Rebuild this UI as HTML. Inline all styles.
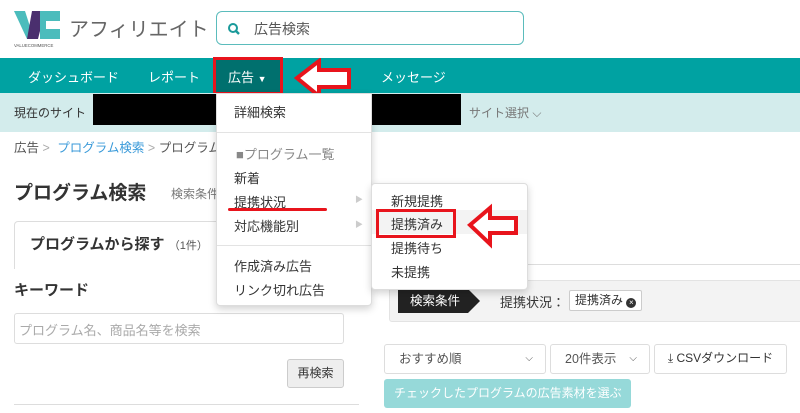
<!DOCTYPE html>
<html><head><meta charset="utf-8"><style>
*{box-sizing:border-box;margin:0;padding:0}
body{width:800px;height:413px;overflow:hidden;background:#fff;font-family:"Liberation Sans","Noto Sans CJK JP",sans-serif;color:#333;position:relative;font-size:13px}
.a{position:absolute}
</style></head><body>
<!-- logo -->
<svg class="a" style="left:14px;top:9px" width="50" height="40" viewBox="0 0 50 40">
<polygon points="0,2 11,2 20,30 13,30" fill="#4bbcbc"/>
<polygon points="18,2 31,2 24,30 13,30" fill="#4a2f6e"/>
<polygon points="26,2 46,2 46,12 32,12 32,20 46,20 46,30 26,30" fill="#4bbcbc"/>
<text x="0" y="38" font-size="4.3" fill="#555" font-family="Liberation Sans">VALUECOMMERCE</text>
</svg>
<div class="a" style="left:69px;top:13px;font-size:20px;color:#666">アフィリエイト</div>
<div class="a" style="left:216px;top:11px;width:308px;height:34px;border:1px solid #5bbcbc;border-radius:6px"></div>
<svg class="a" style="left:227px;top:22px" width="14" height="14" viewBox="0 0 14 14"><circle cx="6" cy="6" r="4" fill="none" stroke="#1a9a9a" stroke-width="2"/><line x1="9" y1="9" x2="12" y2="12" stroke="#1a9a9a" stroke-width="2.4"/></svg>
<div class="a" style="left:254px;top:19px;font-size:14px;color:#555">広告検索</div>
<!-- nav -->
<div class="a" style="left:0;top:58px;width:800px;height:35px;background:#00a2a2"></div>
<div class="a" style="left:28px;top:67px;color:#fff;font-size:13px">ダッシュボード</div>
<div class="a" style="left:148px;top:67px;color:#fff;font-size:13px">レポート</div>
<div class="a" style="left:213px;top:57px;width:70px;height:38px;background:#00706e;border:3px solid #e8141c"></div>
<div class="a" style="left:228px;top:67px;color:#fff;font-size:13px">広告 <span style="font-size:9px">▼</span></div>
<div class="a" style="left:381px;top:67px;color:#fff;font-size:13px">メッセージ</div>
<svg class="a" style="left:292px;top:58px" width="62" height="42" viewBox="0 0 62 42"><polygon points="5,20 27,3 27,12 57,12 57,29 27,29 27,38" fill="#fff" stroke="#e8141c" stroke-width="4" stroke-linejoin="miter"/></svg>
<!-- sub bar -->
<div class="a" style="left:0;top:93px;width:800px;height:39px;background:#d3ecec"></div>
<div class="a" style="left:14px;top:104px;font-size:12px;color:#333">現在のサイト</div>
<div class="a" style="left:93px;top:94px;width:368px;height:31px;background:#000"></div>
<div class="a" style="left:469px;top:104px;font-size:12px;color:#777">サイト選択 ⌵</div>
<!-- breadcrumb -->
<div class="a" style="left:14px;top:137px;font-size:12.5px;color:#555">広告 <span style="color:#aaa">&gt;</span> <span style="color:#3a9ad9;margin-left:4px">プログラム検索</span> <span style="color:#aaa">&gt;</span> プログラム</div>
<div class="a" style="left:14px;top:178px;font-size:19px;font-weight:bold;color:#333">プログラム検索</div>
<div class="a" style="left:171px;top:185px;font-size:12px;color:#777">検索条件</div>
<div class="a" style="left:14px;top:221px;width:230px;height:48px;border:1px solid #ddd;border-bottom:none;border-radius:4px 4px 0 0"></div>
<div class="a" style="left:30px;top:233px;font-size:15px;font-weight:bold;color:#333">プログラムから探す <span style="font-size:11px;font-weight:normal;color:#555">（1件）</span></div>
<div class="a" style="left:14px;top:279px;font-size:15px;font-weight:bold;color:#333">キーワード</div>
<div class="a" style="left:14px;top:313px;width:330px;height:31px;border:1px solid #ddd;border-radius:3px"></div>
<div class="a" style="left:19px;top:320px;font-size:13px;color:#aaa">プログラム名、商品名等を検索</div>
<div class="a" style="left:287px;top:359px;width:57px;height:29px;border:1px solid #ccc;background:#eee;border-radius:3px;font-size:12px;text-align:center;line-height:27px">再検索</div>
<div class="a" style="left:14px;top:404px;width:345px;height:1px;background:#ddd"></div>
<!-- right panel -->
<div class="a" style="left:389px;top:264px;width:411px;height:1px;background:#ddd"></div>
<div class="a" style="left:389px;top:280px;width:415px;height:42px;background:#f3f3f3;border:1px solid #e3e3e3;border-radius:3px"></div>
<div class="a" style="left:398px;top:289px;width:70px;height:24px;background:#222;color:#fff;font-size:12.5px;line-height:24px;padding-left:12px">検索条件</div>
<div class="a" style="left:468px;top:289px;width:0;height:0;border-top:12px solid transparent;border-bottom:12px solid transparent;border-left:12px solid #222"></div>
<div class="a" style="left:500px;top:292px;font-size:13px;color:#333">提携状況：</div>
<div class="a" style="left:569px;top:290px;width:73px;height:21px;border:1px solid #ccc;background:#fff;border-radius:2px;font-size:12px;line-height:19px;padding-left:5px">提携済み <span style="display:inline-block;width:10px;height:10px;border-radius:50%;background:#333;color:#fff;font-size:8px;line-height:10px;text-align:center;vertical-align:-1px">×</span></div>
<div class="a" style="left:384px;top:344px;width:162px;height:30px;border:1px solid #ddd;border-radius:3px;font-size:12.5px;color:#555;line-height:28px;padding-left:14px">おすすめ順<span style="position:absolute;right:12px;font-size:10px">⌵</span></div>
<div class="a" style="left:550px;top:344px;width:100px;height:30px;border:1px solid #ddd;border-radius:3px;font-size:12.5px;color:#555;line-height:28px;padding-left:14px">20件表示<span style="position:absolute;right:12px;font-size:10px">⌵</span></div>
<div class="a" style="left:654px;top:344px;width:133px;height:30px;border:1px solid #ddd;border-radius:3px;font-size:12px;color:#333;line-height:26px;text-align:center">⤓ CSVダウンロード</div>
<div class="a" style="left:384px;top:379px;width:247px;height:29px;background:#96d9d9;border-radius:3px;font-size:12px;color:#fff;line-height:29px;padding-left:10px;white-space:nowrap">チェックしたプログラムの広告素材を選ぶ</div>
<!-- dropdown -->
<div class="a" style="left:216px;top:93px;width:156px;height:213px;background:#fff;border:1px solid #ddd;border-radius:0 0 4px 4px;box-shadow:0 3px 8px rgba(0,0,0,.18)"></div>
<div class="a" style="left:234px;top:102px;font-size:13px;color:#333">詳細検索</div>
<div class="a" style="left:217px;top:132px;width:154px;height:1px;background:#e3e3e3"></div>
<div class="a" style="left:236px;top:144px;font-size:13px;color:#888">■プログラム一覧</div>
<div class="a" style="left:234px;top:168px;font-size:13px">新着</div>
<div class="a" style="left:234px;top:192px;font-size:13px">提携状況</div>
<div class="a" style="left:228px;top:208px;width:99px;height:3px;background:#e8141c;border-radius:2px"></div>
<div class="a" style="left:355px;top:194px;font-size:8px;color:#ccc">▶</div>
<div class="a" style="left:234px;top:216px;font-size:13px">対応機能別</div>
<div class="a" style="left:355px;top:219px;font-size:8px;color:#ccc">▶</div>
<div class="a" style="left:217px;top:245px;width:154px;height:1px;background:#e3e3e3"></div>
<div class="a" style="left:234px;top:256px;font-size:13px">作成済み広告</div>
<div class="a" style="left:234px;top:280px;font-size:13px">リンク切れ広告</div>
<!-- submenu -->
<div class="a" style="left:371px;top:183px;width:157px;height:107px;background:#fff;border:1px solid #ddd;border-radius:4px;box-shadow:0 3px 8px rgba(0,0,0,.18)"></div>
<div class="a" style="left:372px;top:210px;width:155px;height:24px;background:#f3f3f3"></div>
<div class="a" style="left:391px;top:191px;font-size:13px">新規提携</div>
<div class="a" style="left:376px;top:209px;width:80px;height:29px;border:3px solid #e8141c"></div>
<div class="a" style="left:391px;top:214px;font-size:13px">提携済み</div>
<div class="a" style="left:391px;top:238px;font-size:13px">提携待ち</div>
<div class="a" style="left:391px;top:262px;font-size:13px">未提携</div>
<svg class="a" style="left:466px;top:203px" width="56" height="46" viewBox="0 0 56 46"><polygon points="4,22 24,5 24,15 50,15 50,30 24,30 24,41" fill="#fff" stroke="#e8141c" stroke-width="4"/></svg>
</body></html>
